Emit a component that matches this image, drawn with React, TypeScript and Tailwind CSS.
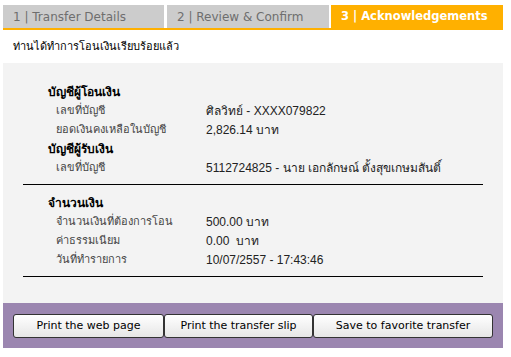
const ROWS_FROM = [
  { label: "เลขที่บัญชี", value: "ศิลวิทย์ - XXXX079822" },
  { label: "ยอดเงินคงเหลือในบัญชี", value: "2,826.14 บาท" },
]

const ROWS_TO = [{ label: "เลขที่บัญชี", value: "5112724825 - นาย เอกลักษณ์ ตั้งสุขเกษมสันติ์" }]

const ROWS_AMOUNT = [
  { label: "จำนวนเงินที่ต้องการโอน", value: "500.00 บาท" },
  { label: "ค่าธรรมเนียม", value: "0.00  บาท" },
  { label: "วันที่ทำรายการ", value: "10/07/2557 - 17:43:46" },
]

const thai = "font-['Tahoma','Noto_Sans','DejaVu_Sans',sans-serif]"

function Heading({ children }: { children: React.ReactNode }) {
  return <div className={`flex h-[19px] items-center pl-[25px] text-[12px] font-bold text-black ${thai}`}>{children}</div>
}

function Row({ label, value }: { label: string; value: string }) {
  return (
    <div className="flex h-[19px] items-center">
      <div className={`w-[183px] shrink-0 pl-[33px] text-[11px] text-[#444] ${thai}`}>{label}</div>
      <div className="whitespace-pre font-['Liberation_Sans','Noto_Sans',sans-serif] text-[12px] text-[#222]">{value}</div>
    </div>
  )
}

function Tab({ label, active, width }: { label: string; active?: boolean; width: string }) {
  return (
    <div
      className={`flex h-[23px] items-center pl-[10px] font-['DejaVu_Sans',sans-serif] ${width} ${
        active ? "bg-[#ffb000] text-[11.5px] font-bold text-white" : "bg-[#cccccc] text-[12px] text-[#6e6e6e]"
      }`}
    >
      {label}
    </div>
  )
}

export default function App() {
  return (
    <div className="h-[357px] w-[511px] overflow-hidden bg-white">
      <div className="ml-[3px] w-[500px] pt-[5px]">
        <div className="flex">
          <Tab label="1 | Transfer Details" width="w-[161px]" />
          <div className="w-[3px]" />
          <Tab label="2 | Review & Confirm" width="w-[162px]" />
          <div className="w-[2px]" />
          <Tab label="3 | Acknowledgements" active width="w-[172px]" />
        </div>
        <div className="h-[2px] bg-[#ffb000]" />

        <div className={`flex h-[33px] items-center pl-[10px] text-[11px] text-black ${thai}`}>
          ท่านได้ทำการโอนเงินเรียบร้อยแล้ว
        </div>

        <div className="h-[240px] bg-[#f3f3f3] px-[20px] pt-[19px]">
          <Heading>บัญชีผู้โอนเงิน</Heading>
          {ROWS_FROM.map((r) => (
            <Row key={r.label} {...r} />
          ))}
          <Heading>บัญชีผู้รับเงิน</Heading>
          {ROWS_TO.map((r) => (
            <Row key={r.label} {...r} />
          ))}
          <div className="mt-[7px] h-px bg-black" />
          <div className="h-[8px]" />
          <Heading>จำนวนเงิน</Heading>
          {ROWS_AMOUNT.map((r) => (
            <Row key={r.label} {...r} />
          ))}
          <div className="mt-[7px] h-px bg-black" />
        </div>

        <div className="flex h-[45px] bg-[#9b86b0] pl-[10px] pt-[11px]">
          {[
            { text: "Print the web page", w: "w-[151px]" },
            { text: "Print the transfer slip", w: "w-[149px]" },
            { text: "Save to favorite transfer", w: "w-[180px]" },
          ].map((b) => (
            <button
              key={b.text}
              className={`h-[24px] ${b.w} rounded-[3px] border border-[#333] bg-gradient-to-b from-white to-[#e6e6e6] font-['DejaVu_Sans',sans-serif] text-[11px] text-black`}
            >
              {b.text}
            </button>
          ))}
        </div>
      </div>
    </div>
  )
}
